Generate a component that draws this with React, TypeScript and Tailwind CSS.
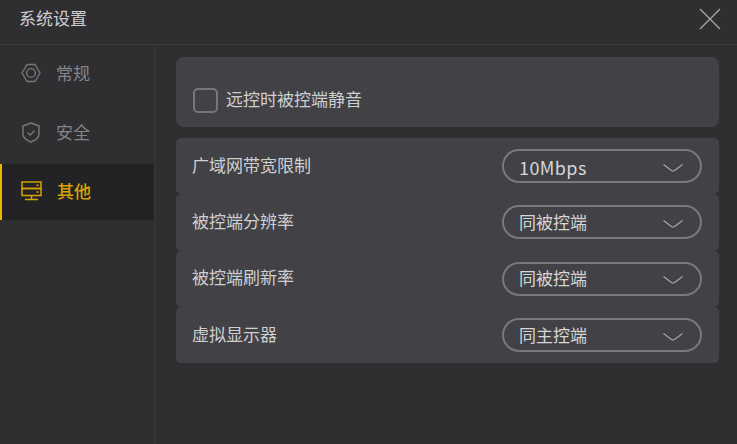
import React from 'react';

const font = { fontFamily: '"Noto Sans CJK SC", "Liberation Sans", sans-serif' };

function Chevron() {
  return (
    <svg className="mt-[3px]" width="20" height="10" viewBox="0 0 20 10" fill="none" stroke="#a8a8aa" strokeWidth="1.1">
      <path d="M0.5 1.5 L8.5 7.5 Q10 8.5 11.5 7.5 L19.5 1.5" />
    </svg>
  );
}

function SettingRow({ label, value }: { label: string; value: string }) {
  return (
    <div className="flex h-[56.3px] items-center justify-between rounded-[5px] bg-[#414146] pl-4 pr-[17px]">
      <span className="mb-[4px] text-[17px] leading-none text-[#cfcfd1]">{label}</span>
      <div className="flex h-[34px] w-[200px] items-center justify-between rounded-full border-2 border-[#79797c] pl-[15px] pr-[17px]">
        <span className={value === '10Mbps' ? 'mt-[1px] text-[18px] leading-none tracking-[0.4px] text-[#d6d6d8]' : 'mb-[2px] text-[17px] leading-none text-[#d6d6d8]'}>
          {value}
        </span>
        <Chevron />
      </div>
    </div>
  );
}

export default function App() {
  return (
    <div style={font} className="flex h-[444px] w-[737px] flex-col overflow-hidden bg-[#2f2f32]">
      {/* Title bar */}
      <header className="flex h-[45px] shrink-0 items-center justify-between border-b border-[#3a3a3d] pb-[7px] pl-[19px] pr-[16px]">
        <span className="mb-[2px] text-[17px] leading-none text-[#cfcfd1]">系统设置</span>
        <svg width="22" height="22" viewBox="0 0 22 22" fill="none" stroke="#a3a3a6" strokeWidth="1.4">
          <path d="M1 1 L21 21 M21 1 L1 21" />
        </svg>
      </header>

      <div className="flex min-h-0 flex-1">
        {/* Sidebar */}
        <aside className="w-[155px] shrink-0 border-r border-[#39393c]">
          <div className="flex h-[59px] items-center gap-[15px] pb-[4px] pl-[21px]">
            <svg width="20" height="20" viewBox="0 0 20 20" fill="none" stroke="#77777a" strokeWidth="1.4">
              <path d="M6 1.5 H14 L19 10 L14 18.5 H6 L1 10 Z" strokeLinejoin="round" />
              <circle cx="10" cy="10" r="4.4" />
            </svg>
            <span className="text-[17px] leading-none text-[#85858a]">常规</span>
          </div>
          <div className="flex h-[60px] items-center gap-[15px] pb-[3px] pl-[21px]">
            <svg width="20" height="21" viewBox="0 0 20 21" fill="none" stroke="#77777a" strokeWidth="1.4">
              <path d="M10 1 L18 4 V12 C18 16 14 18.5 10 20 C6 18.5 2 16 2 12 V4 Z" strokeLinejoin="round" />
              <path d="M6.5 10.5 L9.2 13 L13.5 8.5" />
            </svg>
            <span className="mb-[2px] text-[17px] leading-none text-[#85858a]">安全</span>
          </div>
          <div className="flex h-14 items-center gap-[15px] border-l-2 border-[#f0b400] bg-[#232326] pb-[3px] pl-[19px]">
            <svg width="21" height="20" viewBox="0 0 21 20" fill="none" stroke="#d9a300" strokeWidth="1.5">
              <rect x="1" y="1" width="19" height="6.5" />
              <rect x="1" y="7.5" width="19" height="7" />
              <path d="M15.5 4.2 H17.5 M15.5 11 H17.5" />
              <path d="M10.5 14.5 V18.5 M4 18.5 H17" />
            </svg>
            <span className="text-[17px] font-medium leading-none text-[#d9a300]">其他</span>
          </div>
        </aside>

        {/* Content */}
        <main className="flex-1 pl-[21px] pr-[18px] pt-3">
          <div className="mb-[11px] flex h-[70px] items-center gap-[8px] rounded-lg bg-[#414146] pl-[17px] pt-[16px]">
            <div className="h-[25px] w-[25px] rounded-[5px] border-2 border-[#77777a]" />
            <span className="mb-[4px] text-[17px] leading-none text-[#cfcfd1]">远控时被控端静音</span>
          </div>
          <SettingRow label="广域网带宽限制" value="10Mbps" />
          <SettingRow label="被控端分辨率" value="同被控端" />
          <SettingRow label="被控端刷新率" value="同被控端" />
          <SettingRow label="虚拟显示器" value="同主控端" />
        </main>
      </div>
    </div>
  );
}
